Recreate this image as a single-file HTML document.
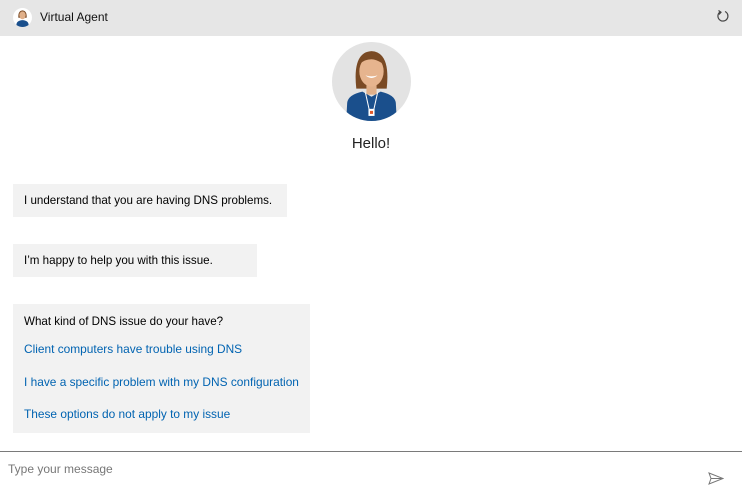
<!DOCTYPE html>
<html><head><meta charset="utf-8"><style>
*{margin:0;padding:0;box-sizing:border-box}
body{width:742px;height:500px;background:#fff;font-family:"Liberation Sans",Arial,sans-serif;position:relative;overflow:hidden;color:#000}
.hdr{position:absolute;left:0;top:0;width:742px;height:36px;background:#e6e6e6}
.hdr .t{position:absolute;left:40px;top:10px;font-size:12px;color:#111}
.b{position:absolute;left:13px;background:#f2f2f2;font-size:11.6px;padding:0 11px;white-space:nowrap}
.l{color:#0063b1;position:absolute;left:11px;white-space:nowrap;font-size:11.9px}
</style></head><body>
<div class="hdr">
<svg style="position:absolute;left:13px;top:8px" width="19" height="19" viewBox="0 0 78 78"><circle cx="39" cy="39" r="39" fill="#fff"/><path d="M22 40 Q20 12 39 10 Q58 12 56 40 Z" fill="#7a4a24"/><ellipse cx="39" cy="30" rx="13" ry="16" fill="#e0b08a"/><path d="M14 70 Q14 52 39 50 Q64 52 64 70 Q52 78 39 78 Q26 78 14 70Z" fill="#1a4f8c"/></svg>
<div class="t">Virtual Agent</div>
<svg style="position:absolute;left:716px;top:9px" width="14" height="14" viewBox="0 0 14 14"><path d="M4 3 A5 5 0 1 0 9 2.5" fill="none" stroke="#444" stroke-width="1.2"/><path d="M2.5 1.5 L5 3.2 L3 5.5" fill="none" stroke="#444" stroke-width="1.2"/></svg>
</div>
<svg style="position:absolute;left:332px;top:42px" width="79" height="79" viewBox="0 0 78 78">
<defs><clipPath id="c"><circle cx="39" cy="39" r="39"/></clipPath></defs>
<circle cx="39" cy="39" r="39" fill="#e3e3e3"/>
<g clip-path="url(#c)">
<path d="M24 46 Q20 10 39 9 Q58 10 54 46 Z" fill="#7a4a24"/>
<rect x="34" y="40" width="10" height="12" fill="#e0b08a"/>
<ellipse cx="39" cy="29" rx="12" ry="15" fill="#e6b48e"/>
<path d="M27 22 Q32 12 39 13 Q48 13 51 22 Q44 17 39 17 Q32 17 27 22Z" fill="#7a4a24"/>
<path d="M33 33 Q39 38 45 33 Q39 35 33 33Z" fill="#fff"/>
<path d="M14 78 L15 60 Q16 52 30 49 L39 54 L48 49 Q62 52 63 60 L64 78Z" fill="#1a4f8c"/>
<path d="M33 50 L37 68 M45 50 L41 68" stroke="#fff" stroke-width="1"/>
<rect x="36" y="66" width="6" height="7" fill="#fff"/>
<rect x="37.5" y="68" width="3" height="3" fill="#e35a2b"/>
</g></svg>
<div style="position:absolute;left:0;width:742px;top:135px;text-align:center;font-size:15px;color:#222">Hello!</div>
<div class="b" style="top:184px;height:33px;line-height:33px;width:274px">I understand that you are having DNS problems.</div>
<div class="b" style="top:244px;height:33px;line-height:33px;width:244px">I’m happy to help you with this issue.</div>
<div class="b" style="top:304px;height:129px;width:297px">
<div style="position:absolute;left:11px;top:11px">What kind of DNS issue do your have?</div>
<div class="l" style="top:38px">Client computers have trouble using DNS</div>
<div class="l" style="top:71px">I have a specific problem with my DNS configuration</div>
<div class="l" style="top:103px">These options do not apply to my issue</div>
</div>
<div style="position:absolute;left:0;top:451px;width:742px;height:1px;background:#7a7a7a"></div>
<div style="position:absolute;left:8px;top:462px;font-size:12px;color:#777">Type your message</div>
<svg style="position:absolute;left:708px;top:472px" width="16" height="13" viewBox="0 0 16 13"><path d="M1 1 L15 6.5 L1 12 L3 6.5 Z M3 6.5 H15" fill="none" stroke="#777" stroke-width="1"/></svg>
</body></html>
